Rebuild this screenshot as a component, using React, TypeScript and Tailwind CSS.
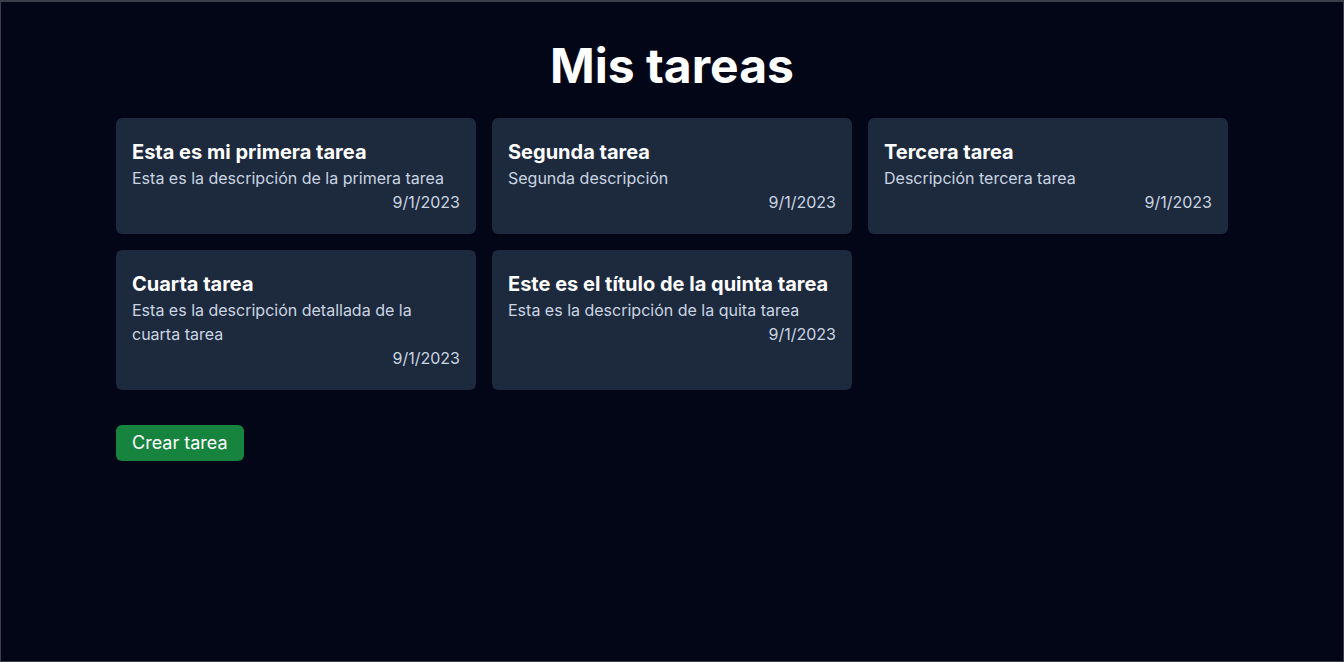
const tasks = [
  {
    id: 1,
    title: 'Esta es mi primera tarea',
    description: 'Esta es la descripción de la primera tarea',
    date: '9/1/2023',
  },
  {
    id: 2,
    title: 'Segunda tarea',
    description: 'Segunda descripción',
    date: '9/1/2023',
  },
  {
    id: 3,
    title: 'Tercera tarea',
    description: 'Descripción tercera tarea',
    date: '9/1/2023',
  },
  {
    id: 4,
    title: 'Cuarta tarea',
    description: 'Esta es la descripción detallada de la cuarta tarea',
    date: '9/1/2023',
  },
  {
    id: 5,
    title: 'Este es el título de la quinta tarea',
    description: 'Esta es la descripción de la quita tarea',
    date: '9/1/2023',
  },
]

function TaskCard({ title, description, date }: { title: string; description: string; date: string }) {
  return (
    <div className="rounded-md bg-slate-800 px-4 py-5">
      <h2 className="text-xl font-bold text-white">{title}</h2>
      <p className="text-base text-slate-300">{description}</p>
      <p className="text-right text-base text-slate-300">{date}</p>
    </div>
  )
}

export default function App() {
  return (
    <div
      className="min-h-screen border border-t-2 border-[#3b3e4b] bg-[#020617] text-white"
      style={{ fontFamily: 'Inter, "Noto Sans", sans-serif' }}
    >
      <div className="mx-auto w-[1112px] pt-10">
        <h1 className="mb-7 text-center text-5xl font-bold">Mis tareas</h1>
        <div className="grid grid-cols-3 gap-4">
          {tasks.map((t) => (
            <TaskCard key={t.id} title={t.title} description={t.description} date={t.date} />
          ))}
        </div>
        <button className="mt-[35px] rounded-md bg-[#16843e] px-4 py-1 text-lg text-white">Crear tarea</button>
      </div>
    </div>
  )
}
